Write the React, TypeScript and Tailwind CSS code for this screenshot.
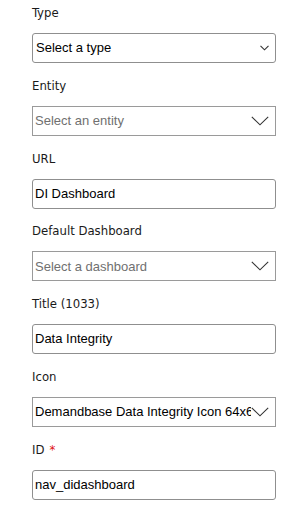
import React from "react";

const labelCls = "h-[22px] leading-[22px] text-[13px] text-[#1a1a1a] font-['DejaVu_Sans_Condensed','DejaVu_Sans',sans-serif]";
const textCls = "text-[13px] font-['Liberation_Sans',Arial,sans-serif]";

function SmallChevron() {
  return (
    <svg width="9" height="6" viewBox="0 0 9 6" className="shrink-0">
      <path d="M0.5 0.8 L4.5 4.8 L8.5 0.8" fill="none" stroke="#333" strokeWidth="1.1" />
    </svg>
  );
}

function BigChevron() {
  return (
    <svg width="18" height="10" viewBox="0 0 18 10" className="shrink-0">
      <path d="M0.8 0.8 L9 8.8 L17.2 0.8" fill="none" stroke="#333" strokeWidth="1.1" />
    </svg>
  );
}

function Field({ label, required, children }: { label: string; required?: boolean; children: React.ReactNode }) {
  return (
    <div className="flex flex-col">
      <div className={labelCls}>
        {label}
        {required && <span className="text-[#e01010] ml-[5px]">*</span>}
      </div>
      <div className="mt-[9px]">{children}</div>
    </div>
  );
}

function TextBox({ value }: { value: string }) {
  return (
    <div className={`h-[30px] border border-[#8f8f8f] rounded-[3px] bg-white flex items-center pl-[2px] text-black ${textCls}`}>
      {value}
    </div>
  );
}

function FlatSelect({ value, placeholder }: { value: string; placeholder?: boolean }) {
  return (
    <div className={`h-[30px] border border-[#9a9a9a] bg-white flex items-center pl-[2px] pr-[6px] ${textCls}`}>
      <span className={`flex-1 min-w-0 whitespace-nowrap overflow-hidden ${placeholder ? "text-[#707070]" : "text-black"}`}>{value}</span>
      <BigChevron />
    </div>
  );
}

export default function App() {
  return (
    <div className="w-[302px] h-[512px] bg-white pl-[32px] pr-[26px] pt-[2px] flex flex-col gap-[11.8px]">
      <Field label="Type">
        <div className={`h-[30px] border border-[#8f8f8f] rounded-[3px] bg-white flex items-center pl-[3px] pr-[6px] text-black ${textCls}`}>
          <span className="flex-1">Select a type</span>
          <SmallChevron />
        </div>
      </Field>
      <Field label="Entity">
        <FlatSelect value="Select an entity" placeholder />
      </Field>
      <Field label="URL">
        <TextBox value="DI Dashboard" />
      </Field>
      <Field label="Default Dashboard">
        <FlatSelect value="Select a dashboard" placeholder />
      </Field>
      <Field label="Title (1033)">
        <TextBox value="Data Integrity" />
      </Field>
      <Field label="Icon">
        <FlatSelect value="Demandbase Data Integrity Icon 64x64" />
      </Field>
      <Field label="ID" required>
        <TextBox value="nav_didashboard" />
      </Field>
    </div>
  );
}
